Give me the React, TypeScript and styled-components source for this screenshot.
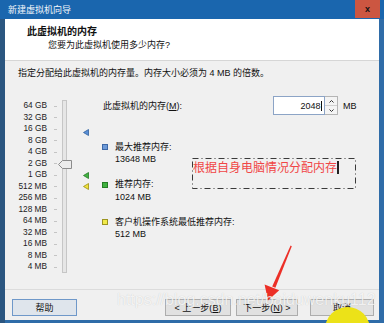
import React from 'react';
import styled, { createGlobalStyle } from 'styled-components';

const ROW = 11.5;

const scaleLabels = [
    '64 GB', '32 GB', '16 GB', '8 GB', '4 GB', '2 GB', '1 GB',
    '512 MB', '256 MB', '128 MB', '64 MB', '32 MB', '16 MB', '8 MB', '4 MB',
];

// slider rows are log2 steps, 64 GB at the top
const rowOf = (mb: number) => 16 - Math.log2(mb);

const marks = [
    { mb: 13648, fill: '#5a8fd6', stroke: '#2f5f9e' },
    { mb: 1024, fill: '#43b343', stroke: '#237a23' },
    { mb: 512, fill: '#f0e23c', stroke: '#9a8f12' },
];

const legend = [
    { label: '最大推荐内存:', value: '13648 MB', fill: '#6d9ad8', stroke: '#3d68a6' },
    { label: '推荐内存:', value: '1024 MB', fill: '#3fb13f', stroke: '#247d24' },
    { label: '客户机操作系统最低推荐内存:', value: '512 MB', fill: '#f1ea4a', stroke: '#9c9420' },
];

const GlobalStyle = createGlobalStyle`
    html, body {
        margin: 0;
        padding: 0;
    }
    body {
        width: 384px;
        height: 323px;
        overflow: hidden;
        font-family: "Liberation Sans", "Noto Sans CJK SC", sans-serif;
        color: #111;
        background: #2b5e91;
    }
`;

export default function App() {
    const memory = 2048;

    return (
        <>
            <GlobalStyle />
            <Window>
                <TitleBar>
                    <TitleText>新建虚拟机向导</TitleText>
                    <CloseButton>x</CloseButton>
                </TitleBar>
                <Frame>
                    <Header>
                        <HeaderTitle>此虚拟机的内存</HeaderTitle>
                        <HeaderSub>您要为此虚拟机使用多少内存?</HeaderSub>
                    </Header>
                    <Body>
                        <Hint>指定分配给此虚拟机的内存量。内存大小必须为 4 MB 的倍数。</Hint>
                        <Main>
                            <Scale>
                                <Labels>
                                    {scaleLabels.map((l) => (
                                        <Label key={l}>{l}</Label>
                                    ))}
                                </Labels>
                                <Ticks>
                                    {scaleLabels.map((l) => (
                                        <Tick key={l} />
                                    ))}
                                </Ticks>
                                <Track>
                                    <Thumb $top={(rowOf(memory) + 0.5) * ROW - 4.5}>
                                        <svg width="14" height="9" viewBox="0 0 14 9">
                                            <polygon
                                                points="0.5,4.5 4.5,0.5 13.5,0.5 13.5,8.5 4.5,8.5"
                                                fill="#ececec"
                                                stroke="#8c8c8c"
                                            />
                                        </svg>
                                    </Thumb>
                                </Track>
                                <Marks>
                                    {marks.map((m) => (
                                        <Mark key={m.mb} $top={(rowOf(m.mb) + 0.5) * ROW - 3.5}>
                                            <svg width="6" height="7" viewBox="0 0 6 7">
                                                <polygon
                                                    points="0.5,3.5 5.5,0.5 5.5,6.5"
                                                    fill={m.fill}
                                                    stroke={m.stroke}
                                                    strokeWidth="0.8"
                                                />
                                            </svg>
                                        </Mark>
                                    ))}
                                </Marks>
                            </Scale>
                            <Panel>
                                <MemRow>
                                    <MemLabel>
                                        此虚拟机的内存(<u>M</u>):
                                    </MemLabel>
                                    <Field>
                                        {memory}
                                        <FieldCaret />
                                    </Field>
                                    <Spin>
                                        <SpinHalf>
                                            <svg width="5" height="3" viewBox="0 0 5 3">
                                                <polyline points="0.5,2.5 2.5,0.5 4.5,2.5" fill="none" stroke="#333" />
                                            </svg>
                                        </SpinHalf>
                                        <SpinHalf>
                                            <svg width="5" height="3" viewBox="0 0 5 3">
                                                <polyline points="0.5,0.5 2.5,2.5 4.5,0.5" fill="none" stroke="#333" />
                                            </svg>
                                        </SpinHalf>
                                    </Spin>
                                    <Unit>MB</Unit>
                                </MemRow>
                                <Legend>
                                    {legend.map((item) => (
                                        <LegendItem key={item.label}>
                                            <Swatch $fill={item.fill} $stroke={item.stroke} />
                                            <div>
                                                <LegendLine>{item.label}</LegendLine>
                                                <LegendLine>{item.value}</LegendLine>
                                            </div>
                                        </LegendItem>
                                    ))}
                                </Legend>
                            </Panel>
                        </Main>
                    </Body>
                    <Footer>
                        <Button $width={65} $focused>帮助</Button>
                        <Spacer />
                        <Button $width={66}>
                            &lt; 上一步(<u>B</u>)
                        </Button>
                        <Button $width={62} $gap={5}>
                            下一步(<u>N</u>) &gt;
                        </Button>
                        <Button $width={64} $gap={12}>取消</Button>
                    </Footer>
                </Frame>

                <Annotation>
                    <svg width="164" height="31" viewBox="0 0 164 31">
                        <rect
                            x="0.5"
                            y="0.5"
                            width="163"
                            height="30"
                            fill="none"
                            stroke="#3a3a3a"
                            strokeWidth="1"
                            strokeDasharray="6 3 1 3"
                        />
                    </svg>
                    <Note>
                        根据自身电脑情况分配内存
                        <NoteCaret />
                    </Note>
                </Annotation>

                <Arrow width="384" height="323" viewBox="0 0 384 323">
                    <polygon points="290.6,245.6 291.8,246.2 275.4,287.8 272.2,286.4" fill="#ec2f27" />
                    <polygon points="264.6,284.4 279.2,290.2 268,300.5" fill="#ec2f27" />
                </Arrow>
                <CursorSpot />
                <Watermark>https://blog.csdn.net/baiduwenku112</Watermark>
            </Window>
        </>
    );
}

const Window = styled.div`
    position: relative;
    width: 384px;
    height: 323px;
    display: flex;
    flex-direction: column;
    overflow: hidden;
    background: linear-gradient(90deg, #2b5680 0, #2b5680 5px, #2f6ca8 5px);
`;

const TitleBar = styled.div`
    height: 19px;
    flex: none;
    display: flex;
    align-items: center;
    padding: 0 4px 0 8px;
    background: #1a66ae;
`;

const TitleText = styled.span`
    font-size: 9px;
    line-height: 12px;
    color: #f2f6fb;
`;

const CloseButton = styled.span`
    margin-left: auto;
    align-self: flex-start;
    width: 25px;
    height: 18px;
    display: flex;
    align-items: center;
    justify-content: center;
    background: #cc5641;
    color: #111;
    font-size: 9px;
    font-weight: bold;
    line-height: 1;
`;

const Frame = styled.div`
    flex: 1;
    display: flex;
    flex-direction: column;
    margin: 0 5px 3px 5px;
    background: #f0f0f0;
`;

const Header = styled.div`
    height: 42px;
    flex: none;
    padding: 7px 0 0 22px;
    box-sizing: border-box;
    background: #fff;
    border-bottom: 1px solid #d6d6d6;
`;

const HeaderTitle = styled.div`
    font-size: 10px;
    line-height: 12px;
    font-weight: bold;
`;

const HeaderSub = styled.div`
    margin: 1px 0 0 21px;
    font-size: 9px;
    line-height: 12px;
`;

const Body = styled.div`
    flex: 1;
    display: flex;
    flex-direction: column;
    padding-top: 6px;
`;

const Hint = styled.div`
    padding-left: 13px;
    font-size: 9px;
    line-height: 12px;
`;

const Main = styled.div`
    display: flex;
    align-items: flex-start;
    margin-top: 17px;
`;

const Scale = styled.div`
    display: flex;
    padding-top: 4.25px;
`;

const Labels = styled.div`
    width: 42px;
    display: flex;
    flex-direction: column;
`;

const Label = styled.div`
    height: ${ROW}px;
    line-height: ${ROW}px;
    font-size: 8.3px;
    text-align: right;
    color: #222;
    white-space: nowrap;
`;

const Ticks = styled.div`
    width: 3px;
    margin-left: 7px;
    display: flex;
    flex-direction: column;
`;

const Tick = styled.div`
    height: ${ROW}px;
    display: flex;
    align-items: center;

    &::after {
        content: '';
        width: 3px;
        height: 1px;
        background: #c4c4c4;
    }
`;

const Track = styled.div`
    position: relative;
    width: 5px;
    height: ${ROW * 15}px;
    margin-left: 5px;
    box-sizing: border-box;
    border: 1px solid #c6c6c6;
    background: #e6e6e6;
`;

const Thumb = styled.div<{ $top: number }>`
    position: absolute;
    left: -5px;
    top: ${(p) => p.$top}px;
    width: 14px;
    height: 9px;

    svg {
        display: block;
    }
`;

const Marks = styled.div`
    position: relative;
    width: 6px;
    height: ${ROW * 15}px;
    margin-left: 16px;
`;

const Mark = styled.div<{ $top: number }>`
    position: absolute;
    left: 0;
    top: ${(p) => p.$top}px;

    svg {
        display: block;
    }
`;

const Panel = styled.div`
    margin-left: 13px;
    display: flex;
    flex-direction: column;
`;

const MemRow = styled.div`
    display: flex;
    align-items: center;
    height: 19px;
`;

const MemLabel = styled.div`
    width: 171px;
    padding-left: 1px;
    box-sizing: border-box;
    font-size: 9px;
    line-height: 12px;
`;

const Field = styled.div`
    width: 52px;
    height: 19px;
    box-sizing: border-box;
    display: flex;
    align-items: center;
    justify-content: flex-end;
    padding-right: 2px;
    border: 1px solid #8ca4c6;
    background: #fff;
    font-size: 9px;
`;

const FieldCaret = styled.span`
    width: 1px;
    height: 10px;
    margin-left: 0.5px;
    background: #111;
`;

const Spin = styled.div`
    width: 13px;
    height: 19px;
    display: flex;
    flex-direction: column;
    box-sizing: border-box;
    border: 1px solid #b5b5b5;
    border-left: none;
    background: #f4f4f4;
`;

const SpinHalf = styled.div`
    flex: 1;
    display: flex;
    align-items: center;
    justify-content: center;

    & + & {
        border-top: 1px solid #d0d0d0;
    }
`;

const Unit = styled.span`
    margin-left: 5px;
    font-size: 9px;
`;

const Legend = styled.div`
    display: flex;
    flex-direction: column;
    gap: 12.5px;
    margin-top: 25.75px;
`;

const LegendItem = styled.div`
    display: flex;
    align-items: flex-start;
`;

const Swatch = styled.span<{ $fill: string; $stroke: string }>`
    width: 6px;
    height: 6px;
    margin: 3.25px 7px 0 0;
    box-sizing: border-box;
    border: 1px solid ${(p) => p.$stroke};
    background: ${(p) => p.$fill};
`;

const LegendLine = styled.div`
    font-size: 9px;
    line-height: 12.5px;
    white-space: nowrap;
`;

const Footer = styled.div`
    height: 31px;
    flex: none;
    display: flex;
    align-items: flex-start;
    box-sizing: border-box;
    padding: 9px 5px 0 7px;
    border-top: 1px solid #dcdcdc;
`;

const Spacer = styled.div`
    flex: 1;
`;

const Button = styled.div<{ $width: number; $gap?: number; $focused?: boolean }>`
    width: ${(p) => p.$width}px;
    height: 17px;
    margin-left: ${(p) => p.$gap ?? 0}px;
    box-sizing: border-box;
    display: flex;
    align-items: center;
    justify-content: center;
    border: 1px solid ${(p) => (p.$focused ? '#6f98c9' : '#adadad')};
    background: ${(p) => (p.$focused ? '#dfe5ec' : '#e1e1e1')};
    font-size: 9px;
    white-space: nowrap;
`;

const Annotation = styled.div`
    position: absolute;
    left: 192px;
    top: 158px;
    width: 164px;
    height: 31px;

    svg {
        position: absolute;
        inset: 0;
    }
`;

const Note = styled.div`
    position: absolute;
    left: 1px;
    top: 2px;
    display: flex;
    align-items: center;
    font-size: 12px;
    line-height: 14px;
    color: #f04646;
    white-space: nowrap;
    font-family: "Noto Sans CJK SC", sans-serif;
`;

const NoteCaret = styled.span`
    width: 1.5px;
    height: 13px;
    background: #222;
`;

const Arrow = styled.svg`
    position: absolute;
    left: 0;
    top: 0;
    pointer-events: none;
`;

const CursorSpot = styled.div`
    position: absolute;
    left: 325px;
    top: 307px;
    width: 45px;
    height: 45px;
    border-radius: 50%;
    background: #ece218;
`;

const Watermark = styled.div`
    position: absolute;
    left: 117px;
    top: 292px;
    font-size: 16px;
    line-height: 16px;
    color: rgba(255, 255, 255, 0.78);
    text-shadow: 0 0 1px rgba(0, 0, 0, 0.18);
    white-space: nowrap;
    pointer-events: none;
`;
